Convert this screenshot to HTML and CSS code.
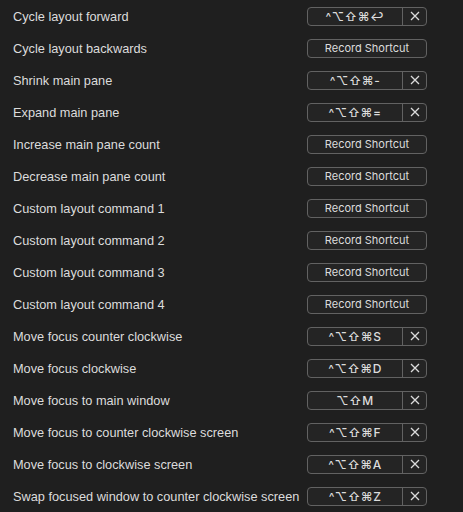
FILE: index.html
```html
<!DOCTYPE html>
<html>
<head>
<meta charset="utf-8">
<link rel="stylesheet" href="styles.css">
</head>
<body>
<div class="list">
  <div class="row"><span class="label">Cycle layout forward</span><div class="sc"><span class="keys">^⌥⇧⌘↩</span><span class="clear"><svg width="10" height="10" viewBox="0 0 10 10"><path d="M1 1L9 9M9 1L1 9"/></svg></span></div></div>
  <div class="row"><span class="label">Cycle layout backwards</span><div class="rec">Record Shortcut</div></div>
  <div class="row"><span class="label">Shrink main pane</span><div class="sc"><span class="keys">^⌥⇧⌘-</span><span class="clear"><svg width="10" height="10" viewBox="0 0 10 10"><path d="M1 1L9 9M9 1L1 9"/></svg></span></div></div>
  <div class="row"><span class="label">Expand main pane</span><div class="sc"><span class="keys">^⌥⇧⌘=</span><span class="clear"><svg width="10" height="10" viewBox="0 0 10 10"><path d="M1 1L9 9M9 1L1 9"/></svg></span></div></div>
  <div class="row"><span class="label">Increase main pane count</span><div class="rec">Record Shortcut</div></div>
  <div class="row"><span class="label">Decrease main pane count</span><div class="rec">Record Shortcut</div></div>
  <div class="row"><span class="label">Custom layout command 1</span><div class="rec">Record Shortcut</div></div>
  <div class="row"><span class="label">Custom layout command 2</span><div class="rec">Record Shortcut</div></div>
  <div class="row"><span class="label">Custom layout command 3</span><div class="rec">Record Shortcut</div></div>
  <div class="row"><span class="label">Custom layout command 4</span><div class="rec">Record Shortcut</div></div>
  <div class="row"><span class="label">Move focus counter clockwise</span><div class="sc"><span class="keys">^⌥⇧⌘S</span><span class="clear"><svg width="10" height="10" viewBox="0 0 10 10"><path d="M1 1L9 9M9 1L1 9"/></svg></span></div></div>
  <div class="row"><span class="label">Move focus clockwise</span><div class="sc"><span class="keys">^⌥⇧⌘D</span><span class="clear"><svg width="10" height="10" viewBox="0 0 10 10"><path d="M1 1L9 9M9 1L1 9"/></svg></span></div></div>
  <div class="row"><span class="label">Move focus to main window</span><div class="sc"><span class="keys">⌥⇧M</span><span class="clear"><svg width="10" height="10" viewBox="0 0 10 10"><path d="M1 1L9 9M9 1L1 9"/></svg></span></div></div>
  <div class="row"><span class="label">Move focus to counter clockwise screen</span><div class="sc"><span class="keys">^⌥⇧⌘F</span><span class="clear"><svg width="10" height="10" viewBox="0 0 10 10"><path d="M1 1L9 9M9 1L1 9"/></svg></span></div></div>
  <div class="row"><span class="label">Move focus to clockwise screen</span><div class="sc"><span class="keys">^⌥⇧⌘A</span><span class="clear"><svg width="10" height="10" viewBox="0 0 10 10"><path d="M1 1L9 9M9 1L1 9"/></svg></span></div></div>
  <div class="row"><span class="label">Swap focused window to counter clockwise screen</span><div class="sc"><span class="keys">^⌥⇧⌘Z</span><span class="clear"><svg width="10" height="10" viewBox="0 0 10 10"><path d="M1 1L9 9M9 1L1 9"/></svg></span></div></div>
</div>
</body>
</html>
```

FILE: styles.css
```css
html, body {
  margin: 0;
  padding: 0;
  background: #1f1f1f;
  width: 463px;
  height: 512px;
  overflow: hidden;
}
.list {
  display: flex;
  flex-direction: column;
  padding-left: 13px;
}
.row {
  height: 32px;
  display: grid;
  grid-template-columns: 294px 120px;
  align-items: center;
}
.label {
  font-family: "Liberation Sans", Arial, sans-serif;
  font-size: 12.75px;
  color: #dcdcdc;
  white-space: nowrap;
}
.sc, .rec {
  box-sizing: border-box;
  height: 19px;
  border: 1px solid #626262;
  border-radius: 4px;
  background: #242424;
  color: #dcdcdc;
  font-family: Inter, "Noto Sans", sans-serif;
}
.rec {
  display: flex;
  align-items: center;
  justify-content: center;
  font-size: 11px;
}
.sc {
  display: grid;
  grid-template-columns: 95px 1fr;
}
.keys {
  display: flex;
  align-items: center;
  justify-content: center;
  font-family: Inter, "DejaVu Sans", sans-serif;
  font-size: 12px;
  font-weight: 500;
  border-right: 1px solid #626262;
  letter-spacing: 0.5px;
}
.clear {
  display: flex;
  align-items: center;
  justify-content: center;
}
.clear svg {
  display: block;
}
.clear path {
  stroke: #dcdcdc;
  stroke-width: 1.3;
  fill: none;
}
```
